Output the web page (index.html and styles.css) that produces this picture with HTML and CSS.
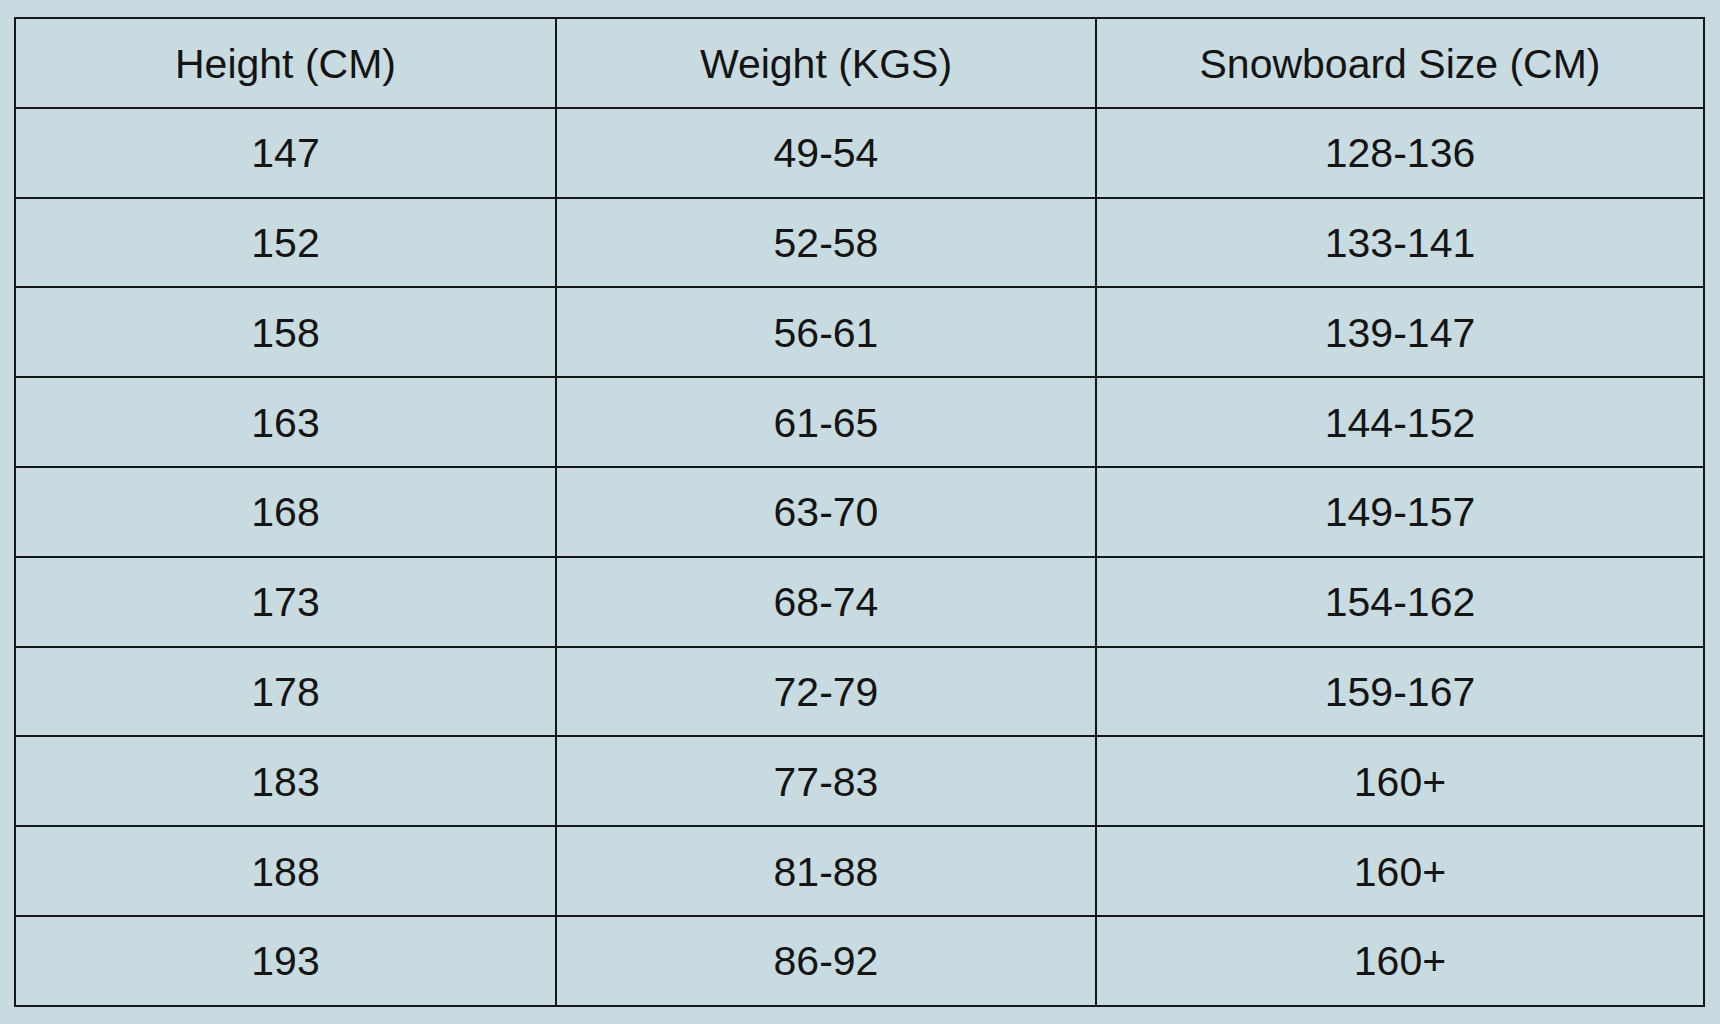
FILE: index.html
```html
<!DOCTYPE html>
<html>
<head>
<meta charset="utf-8">
<link rel="stylesheet" href="styles.css">
</head>
<body>
<div class="page">
<table class="chart">
  <colgroup><col class="c1"><col class="c2"><col class="c3"></colgroup>
  <thead>
    <tr><th>Height (CM)</th><th>Weight (KGS)</th><th>Snowboard Size (CM)</th></tr>
  </thead>
  <tbody>
    <tr><td>147</td><td>49-54</td><td>128-136</td></tr>
    <tr><td>152</td><td>52-58</td><td>133-141</td></tr>
    <tr><td>158</td><td>56-61</td><td>139-147</td></tr>
    <tr><td>163</td><td>61-65</td><td>144-152</td></tr>
    <tr><td>168</td><td>63-70</td><td>149-157</td></tr>
    <tr><td>173</td><td>68-74</td><td>154-162</td></tr>
    <tr><td>178</td><td>72-79</td><td>159-167</td></tr>
    <tr><td>183</td><td>77-83</td><td>160+</td></tr>
    <tr><td>188</td><td>81-88</td><td>160+</td></tr>
    <tr><td>193</td><td>86-92</td><td>160+</td></tr>
  </tbody>
</table>
</div>
</body>
</html>
```
FILE: styles.css
```css
html, body {
  margin: 0;
  padding: 0;
  background: #c7dbe1;
  width: 1720px;
  height: 1024px;
  overflow: hidden;
}
.page {
  padding: 17px 0 0 14px;
}
.chart {
  border-collapse: collapse;
  table-layout: fixed;
  width: 1689px;
  font-family: "Liberation Sans", Arial, sans-serif;
  font-size: 41px;
  color: #141414;
}
.c1 { width: 541px; }
.c2 { width: 540px; }
.c3 { width: 608px; }
.chart th, .chart td {
  border: 2px solid #161616;
  padding: 0;
  text-align: center;
  vertical-align: middle;
  font-weight: normal;
  line-height: 1;
}
.chart th {
  padding-top: 4px;
  height: 83.8px;
}
.chart td {
  padding-top: 2px;
  height: 85.8px;
}
```
